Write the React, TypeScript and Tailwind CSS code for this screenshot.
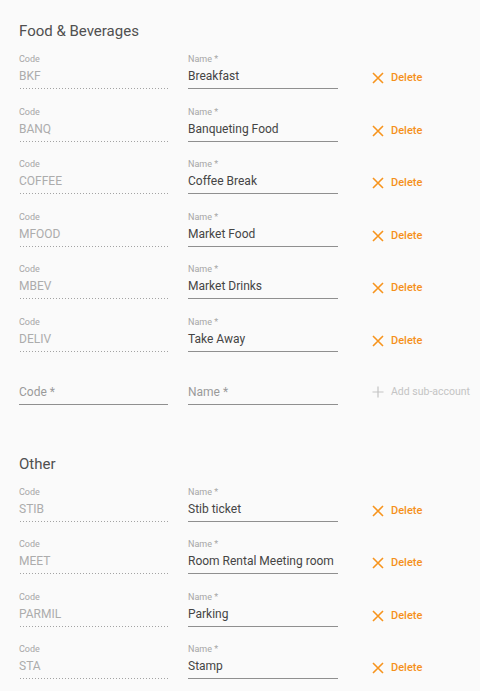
import React from "react";

type Account = { code: string; name: string };

const sections: { title: string; items: Account[]; add?: boolean }[] = [
  {
    title: "Food & Beverages",
    add: true,
    items: [
      { code: "BKF", name: "Breakfast" },
      { code: "BANQ", name: "Banqueting Food" },
      { code: "COFFEE", name: "Coffee Break" },
      { code: "MFOOD", name: "Market Food" },
      { code: "MBEV", name: "Market Drinks" },
      { code: "DELIV", name: "Take Away" },
    ],
  },
  {
    title: "Other",
    items: [
      { code: "STIB", name: "Stib ticket" },
      { code: "MEET", name: "Room Rental Meeting room" },
      { code: "PARMIL", name: "Parking" },
      { code: "STA", name: "Stamp" },
    ],
  },
];

function XIcon() {
  return (
    <svg width="12" height="12" viewBox="0 0 12 12" className="shrink-0">
      <path d="M1 1 L11 11 M11 1 L1 11" stroke="#f7941d" strokeWidth="1.6" fill="none" />
    </svg>
  );
}

function PlusIcon() {
  return (
    <svg width="12" height="12" viewBox="0 0 12 12" className="shrink-0">
      <path d="M6 0.5 V11.5 M0.5 6 H11.5" stroke="#c4c4c4" strokeWidth="1.2" fill="none" />
    </svg>
  );
}

function Row({ item }: { item: Account }) {
  return (
    <div className="flex h-[52.6px] items-start">
      <div className="w-[149px] shrink-0">
        <div className="h-[13px] text-[9px] leading-[13px] text-[#a6a6a6]">Code</div>
        <div className="h-[20px] bg-[linear-gradient(to_right,#a3a3a3_0%,#a3a3a3_33%,transparent_0%)] bg-bottom bg-[length:3px_1px] bg-repeat-x pb-[3px] text-[12px] leading-[20px] text-[#acacac] box-content">
          {item.code}
        </div>
      </div>
      <div className="ml-[20px] w-[150px] shrink-0">
        <div className="h-[13px] text-[9px] leading-[13px] text-[#a6a6a6]">Name *</div>
        <div className="h-[20px] whitespace-nowrap border-b border-[#8f8f8f] pb-[2px] text-[12px] leading-[20px] text-[#454545] box-content">
          {item.name}
        </div>
      </div>
      <div className="ml-[34px] mt-[18px] flex items-center gap-[7px] text-[11px] font-medium leading-[14px] text-[#f5901a]">
        <XIcon />
        <span>Delete</span>
      </div>
    </div>
  );
}

function AddRow() {
  return (
    <div className="flex h-[52.6px] items-start">
      <div className="w-[149px] shrink-0 pt-[13px]">
        <div className="h-[20px] border-b border-[#8f8f8f] pb-[2px] text-[12px] leading-[20px] text-[#9a9a9a] box-content">
          Code *
        </div>
      </div>
      <div className="ml-[20px] w-[150px] shrink-0 pt-[13px]">
        <div className="h-[20px] border-b border-[#8f8f8f] pb-[2px] text-[12px] leading-[20px] text-[#9a9a9a] box-content">
          Name *
        </div>
      </div>
      <div className="ml-[34px] mt-[16px] flex items-center gap-[7px] whitespace-nowrap text-[10.5px] leading-[14px] text-[#c4c4c4]">
        <PlusIcon />
        <span>Add sub-account</span>
      </div>
    </div>
  );
}

export default function App() {
  return (
    <div
      className="min-h-[691px] bg-[#fafafa] px-[19px] pt-[21px]"
      style={{ fontFamily: "Roboto, 'Liberation Sans', sans-serif" }}
    >
      {sections.map((s, i) => (
        <section key={s.title} className={i > 0 ? "mt-[32.4px]" : ""}>
          <h2 className="mb-[12px] h-[20px] text-[15px] leading-[20px] text-[#505050]">{s.title}</h2>
          {s.items.map((it) => (
            <Row key={it.code} item={it} />
          ))}
          {s.add && <AddRow />}
        </section>
      ))}
    </div>
  );
}
